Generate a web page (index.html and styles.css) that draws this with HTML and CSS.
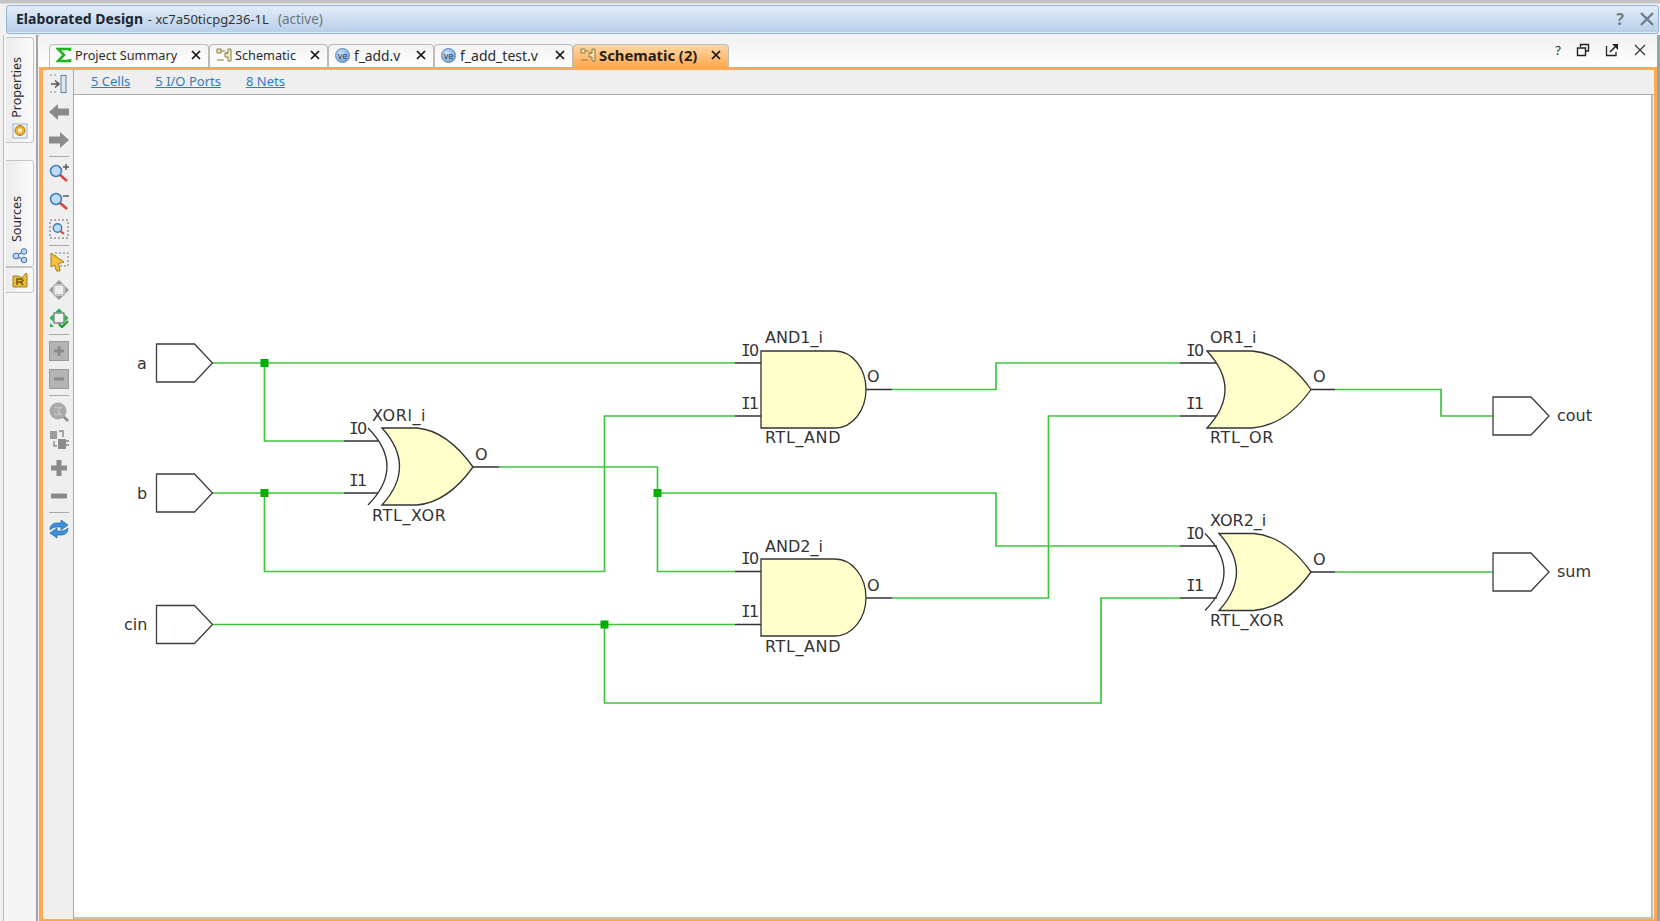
FILE: index.html
```html
<!DOCTYPE html>
<html lang="en">
<head>
<meta charset="utf-8">
<title>Elaborated Design</title>
<link rel="stylesheet" href="styles.css">
</head>
<body>
<div class="app">
  <header class="title">
    <span class="title-main">Elaborated Design</span>
    <span class="title-part">&nbsp;&nbsp;- xc7a50ticpg236-1L</span>
    <span class="title-state">(active)</span>
    <span class="title-actions">
      <span class="title-help">?</span>
      <svg class="ico" width="16" height="16" viewBox="0 0 16 16"><path d="M2 2L14 14M14 2L2 14" stroke="#6d7c88" stroke-width="2.4" fill="none"/></svg>
    </span>
  </header>
  <div class="work">
    <aside class="side">
      <div class="vtab vtab-props">
        <span class="vlabel">Properties</span>
        <svg width="16" height="16" viewBox="0 0 16 16"><rect x="1" y="1" width="14" height="14" fill="#eef3fa" stroke="#9db4cf"/><circle cx="8" cy="7.5" r="5" fill="#eeb02e" stroke="#a87a1c"/><circle cx="8" cy="7.5" r="2.2" fill="#fbeec0"/></svg>
      </div>
      <div class="vtab vtab-src">
        <span class="vlabel">Sources</span>
        <svg width="16" height="15" viewBox="0 0 16 15"><path d="M4 8L12 3M4 8L12 12" stroke="#4a79ad" stroke-width="1.3"/><circle cx="4" cy="8" r="3" fill="#bcd5ef" stroke="#3d6fa8"/><circle cx="12" cy="3.5" r="2.8" fill="#bcd5ef" stroke="#3d6fa8"/><circle cx="12" cy="12" r="2.8" fill="#bcd5ef" stroke="#3d6fa8"/></svg>
      </div>
      <div class="vtab vtab-rtl">
        <svg width="16" height="16" viewBox="0 0 16 16"><path d="M1 4H6L10 6L14 1L15 2V15H1Z" fill="#e8bb3c" stroke="#a67d18"/><path d="M5 13V7H9.500L11 8.500L9.500 10H5M8.500 10L11 13" stroke="#7a5a10" stroke-width="1.500" fill="none"/></svg>
      </div>
    </aside>
    <main class="main">
      <nav class="tabbar">
        <div class="tab tab-summary">
          <svg class="tab-ico" width="16" height="16" viewBox="0 0 16 16"><path d="M14 4V2H2L8 8L2 14H14V12" fill="none" stroke="#1fb31f" stroke-width="2.6"/></svg>
          <span>Project Summary</span>
          <svg class="tab-x" width="10" height="10" viewBox="0 0 10 10"><path d="M1 1L9 9M9 1L1 9" stroke="#111" stroke-width="1.7"/></svg>
        </div>
        <div class="tab tab-schem">
          <svg class="tab-ico" width="16" height="14" viewBox="0 0 16 14"><path d="M1 1H5V5H1ZM9 5H12V1H15V13H12V9H9ZM5 3H9M1 12H8M12 5H9" fill="#f6e9b9" stroke="#8a7a4a"/></svg>
          <span>Schematic</span>
          <svg class="tab-x" width="10" height="10" viewBox="0 0 10 10"><path d="M1 1L9 9M9 1L1 9" stroke="#111" stroke-width="1.7"/></svg>
        </div>
        <div class="tab tab-fadd">
          <span class="ve">ve</span>
          <span>f_add.v</span>
          <svg class="tab-x" width="10" height="10" viewBox="0 0 10 10"><path d="M1 1L9 9M9 1L1 9" stroke="#111" stroke-width="1.7"/></svg>
        </div>
        <div class="tab tab-ftest">
          <span class="ve">ve</span>
          <span>f_add_test.v</span>
          <svg class="tab-x" width="10" height="10" viewBox="0 0 10 10"><path d="M1 1L9 9M9 1L1 9" stroke="#111" stroke-width="1.7"/></svg>
        </div>
        <div class="tab tab-active">
          <svg class="tab-ico" width="16" height="14" viewBox="0 0 16 14"><path d="M1 1H5V5H1ZM9 5H12V1H15V13H12V9H9ZM5 3H9M1 12H8M12 5H9" fill="#f6dfa3" stroke="#8a7a4a"/></svg>
          <span>Schematic (2)</span>
          <svg class="tab-x" width="10" height="10" viewBox="0 0 10 10"><path d="M1 1L9 9M9 1L1 9" stroke="#111" stroke-width="1.7"/></svg>
        </div>
        <div class="tab-actions">
          <span class="tab-help">?</span>
          <svg width="14" height="14" viewBox="0 0 14 14"><path d="M4.500 4V1.500H12.500V8H9.500M1.500 5H9.500V12.500H1.500Z" fill="none" stroke="#222" stroke-width="1.400"/></svg>
          <svg width="14" height="14" viewBox="0 0 14 14"><path d="M1.500 3V12.500H11V9" fill="none" stroke="#222" stroke-width="1.300"/><path d="M5 9L10 4" stroke="#222" stroke-width="1.600"/><path d="M7 1H13V7Z" fill="#222"/></svg>
          <svg width="12" height="12" viewBox="0 0 12 12"><path d="M1 1L11 11M11 1L1 11" stroke="#333" stroke-width="1.100"/></svg>
        </div>
      </nav>
      <section class="panel">
        <div class="toolbar">
          <div class="tool"><svg width="20" height="20" viewBox="0 0 20 20"><path d="M1 1H9M1 18H9" stroke="#888" stroke-dasharray="2 2"/><path d="M2 10H9M6 6.500L10 10L6 13.500" fill="none" stroke="#555" stroke-width="1.600"/><rect x="12" y="1.500" width="5" height="17" fill="#dbe6f2" stroke="#6b8199"/></svg></div>
          <div class="tool"><svg width="20" height="18" viewBox="0 0 20 18"><path d="M0 9L9 1V5.500H20V12.500H9V17Z" fill="#8a8a8a"/></svg></div>
          <div class="tool"><svg width="20" height="18" viewBox="0 0 20 18"><path d="M20 9L11 1V5.500H0V12.500H11V17Z" fill="#8a8a8a"/></svg></div>
          <div class="tool-sep"></div>
          <div class="tool"><svg width="20" height="20" viewBox="0 0 20 20"><path d="M10 11L18 18" stroke="#d8453a" stroke-width="2.600"/><circle cx="7" cy="8" r="5.500" fill="#bcdcf5" stroke="#3f78b5" stroke-width="1.500"/><path d="M14 4H20M17 1V7" stroke="#555" stroke-width="1.400"/></svg></div>
          <div class="tool"><svg width="20" height="20" viewBox="0 0 20 20"><path d="M10 11L18 18" stroke="#d8453a" stroke-width="2.600"/><circle cx="7" cy="8" r="5.500" fill="#bcdcf5" stroke="#3f78b5" stroke-width="1.500"/><path d="M14 5H20" stroke="#555" stroke-width="1.400"/></svg></div>
          <div class="tool"><svg width="20" height="20" viewBox="0 0 20 20"><rect x="1" y="1" width="18" height="18" fill="none" stroke="#666" stroke-dasharray="2 2"/><path d="M10 11L15 15" stroke="#d8453a" stroke-width="2.200"/><circle cx="8.500" cy="9" r="4.200" fill="#bcdcf5" stroke="#3f78b5" stroke-width="1.400"/></svg></div>
          <div class="tool-sep"></div>
          <div class="tool"><svg width="20" height="20" viewBox="0 0 20 20"><rect x="6" y="1" width="13" height="13" fill="none" stroke="#777" stroke-dasharray="2 2"/><path d="M2 1L15 10L9.500 11.500L11 19L7.500 19L5.500 13L2 15Z" fill="#f1c23e" stroke="#a87d17"/></svg></div>
          <div class="tool"><svg width="20" height="20" viewBox="0 0 20 20"><rect x="5" y="5" width="10" height="10" fill="#eee" stroke="#999"/><path d="M10 0L14 4H6ZM10 20L14 16H6ZM0 10L4 6V14ZM20 10L16 6V14Z" fill="#9a9a9a"/></svg></div>
          <div class="tool"><svg width="20" height="20" viewBox="0 0 20 20"><rect x="5" y="5" width="10" height="10" fill="#f2f2f2" stroke="#555"/><path d="M10 0.500L14 4.500H6ZM0.500 10L4.500 6V14ZM19.500 10L15.500 6V14ZM5 19L1 15V19Z" fill="#22b14c"/><path d="M10 16L13 19L19 13" fill="none" stroke="#18a02c" stroke-width="2.400"/></svg></div>
          <div class="tool-sep"></div>
          <div class="tool"><svg width="20" height="20" viewBox="0 0 20 20"><rect x="0.500" y="0.500" width="19" height="19" fill="#b4b4b4" stroke="#999"/><path d="M10 5V15M5 10H15" stroke="#8b8b8b" stroke-width="3"/></svg></div>
          <div class="tool"><svg width="20" height="20" viewBox="0 0 20 20"><rect x="0.500" y="0.500" width="19" height="19" fill="#b4b4b4" stroke="#999"/><path d="M5 10H15" stroke="#8b8b8b" stroke-width="3"/></svg></div>
          <div class="tool-sep"></div>
          <div class="tool"><svg width="20" height="20" viewBox="0 0 20 20"><path d="M14 14L19 19" stroke="#8e8e8e" stroke-width="2.600"/><circle cx="9" cy="9" r="8.500" fill="#a9a9a9"/><path d="M5 5.500H12L9 9L12 12.500H5" fill="none" stroke="#c4c4c4" stroke-width="1.400"/></svg></div>
          <div class="tool"><svg width="20" height="20" viewBox="0 0 20 20"><rect x="1" y="1" width="7" height="8" fill="#9c9c9c"/><rect x="9" y="9" width="8" height="10" fill="#8c8c8c"/><path d="M10 1H14V7M5 11V16H8M17 11H20M17 15H20" fill="none" stroke="#888" stroke-width="1.400"/></svg></div>
          <div class="tool"><svg width="20" height="20" viewBox="0 0 20 20"><path d="M10 2V18M2 10H18" stroke="#8a8a8a" stroke-width="5"/></svg></div>
          <div class="tool"><svg width="20" height="20" viewBox="0 0 20 20"><path d="M2 10H18" stroke="#8a8a8a" stroke-width="5"/></svg></div>
          <div class="tool-sep"></div>
          <div class="tool"><svg width="20" height="20" viewBox="0 0 20 20"><path d="M1 11C1 6 4 4 8 4H12V1L19 6L12 11V8H8C5 8 3 9 1 11Z" fill="#3d8fdc" stroke="#2166ad" stroke-width=".7"/><path d="M19 9C19 14 16 16 12 16H8V19L1 14L8 9V12H12C15 12 17 11 19 9Z" fill="#3d8fdc" stroke="#2166ad" stroke-width=".7"/></svg></div>
        </div>
        <div class="content">
          <div class="links">
            <a class="link">5 Cells</a>
            <a class="link">5 I/O Ports</a>
            <a class="link">8 Nets</a>
          </div>
          <div class="canvas">
            <svg class="sch" viewBox="74 95 1577 822" width="1577" height="822">
              <defs>
                <g id="port"><path d="M0 0H38L56 19L38 38H0Z" class="outline"/></g>
              </defs>
              <g class="wires">
                <path d="M212 363H735M264.500 363V441H344"/>
                <path d="M212 493H344M264.500 493V571.500H604.500V416H735"/>
                <path d="M212 624.500H735M604.500 624.500V703H1101V598H1180"/>
                <path d="M499 467H657.500V571.500H735M657.500 493H996V546H1180"/>
                <path d="M892 389.500H996V363H1180"/>
                <path d="M892 598H1048.500V416H1180"/>
                <path d="M1335 389.500H1441V416H1493"/>
                <path d="M1335 572H1493"/>
              </g>
              <g class="pins">
                <path d="M344 441H378M344 493H378M473 467H499"/>
                <path d="M735 363H761M735 416H761M866 389.500H892"/>
                <path d="M735 571.500H761M735 624.500H761M866 598H892"/>
                <path d="M1180 363H1217M1180 416H1217M1311 389.500H1335"/>
                <path d="M1180 546H1217M1180 598H1217M1311 572H1335"/>
              </g>
              <g class="junctions">
                <rect x="260.500" y="359" width="8" height="8"/>
                <rect x="260.500" y="489" width="8" height="8"/>
                <rect x="653.500" y="489" width="8" height="8"/>
                <rect x="600.500" y="620.500" width="8" height="8"/>
              </g>
              <use href="#port" x="156.500" y="344"/>
              <use href="#port" x="156.500" y="474"/>
              <use href="#port" x="156.500" y="605.500"/>
              <use href="#port" x="1493" y="397"/>
              <use href="#port" x="1493" y="553"/>
              <path class="gate" d="M382 428H417C440 430 458 446 473 467C458 488 440 503 417 505H382Q417 466.500 382 428Z"/>
              <path class="arc" d="M368 428Q406 466.500 368 505"/>
              <path class="gate" d="M761 351H835A31 38.500 0 0 1 835 428H761Z"/>
              <path class="gate" d="M761 559H835A31 38.500 0 0 1 835 636H761Z"/>
              <path class="gate" d="M1207 351H1252C1276 353 1296 368 1311 389.500C1296 411 1276 426 1252 428H1207Q1243 389.500 1207 351Z"/>
              <path class="gate" d="M1219 533.500H1254C1277 535.500 1296 551 1311 572C1296 593 1277 608.500 1254 610.500H1219Q1254 572 1219 533.500Z"/>
              <path class="arc" d="M1205 533.500Q1243 572 1205 610.500"/>
              <g class="labels">
                <text x="137" y="369">a</text>
                <text x="137" y="499">b</text>
                <text x="124" y="630">cin</text>
                <text x="1557" y="421">cout</text>
                <text x="1557" y="577">sum</text>
                <text class="wide" x="372" y="421">XORl_i</text>
                <text class="wide" x="372" y="521">RTL_XOR</text>
                <text x="475" y="460">O</text>
                <text x="765" y="343">AND1_i</text>
                <text class="wide" x="765" y="443">RTL_AND</text>
                <text x="867" y="382">O</text>
                <text x="765" y="552">AND2_i</text>
                <text class="wide" x="765" y="652">RTL_AND</text>
                <text x="867" y="591">O</text>
                <text x="1210" y="343">OR1_i</text>
                <text class="wide" x="1210" y="443">RTL_OR</text>
                <text x="1313" y="382">O</text>
                <text x="1210" y="526">XOR2_i</text>
                <text class="wide" x="1210" y="626">RTL_XOR</text>
                <text x="1313" y="565">O</text>
              </g>
              <g class="pinlabels">
                <text x="349" y="434"><tspan class="pin-i">I</tspan>0</text>
                <text x="349" y="486"><tspan class="pin-i">I</tspan>1</text>
                <text x="741" y="356"><tspan class="pin-i">I</tspan>0</text>
                <text x="741" y="409"><tspan class="pin-i">I</tspan>1</text>
                <text x="741" y="564"><tspan class="pin-i">I</tspan>0</text>
                <text x="741" y="617"><tspan class="pin-i">I</tspan>1</text>
                <text x="1186" y="356"><tspan class="pin-i">I</tspan>0</text>
                <text x="1186" y="409"><tspan class="pin-i">I</tspan>1</text>
                <text x="1186" y="539"><tspan class="pin-i">I</tspan>0</text>
                <text x="1186" y="591"><tspan class="pin-i">I</tspan>1</text>
              </g>
            </svg>
          </div>
        </div>
      </section>
    </main>
  </div>
</div>
</body>
</html>
```

FILE: styles.css
```css
* { box-sizing: border-box; }
html, body { margin: 0; padding: 0; }
body { font-family: "Noto Sans", "DejaVu Sans", sans-serif; color: #222; overflow: hidden; }

.app {
  width: 1660px;
  height: 921px;
  display: flex;
  flex-direction: column;
  padding-top: 5px;
  background: linear-gradient(#c4c4c4 0, #c4c4c4 3px, #f1f1f1 4px);
}

.title {
  height: 29px;
  margin: 0 1px 1px 6px;
  padding: 0 3px 2px 9px;
  display: flex;
  align-items: center;
  flex: none;
  border: 1px solid #93b4d8;
  border-radius: 3px;
  background: linear-gradient(#e3edf8, #b6cee8);
  box-shadow: inset 0 -1px 0 #dfeaf6;
  white-space: pre;
}
.title-main { font-weight: 700; font-size: 14px; color: #1c2530; }
.title-part { color: #333; font-size: 13px; margin-left: -2px; }
.title-state { color: #6e7780; margin-left: 9px; font-size: 13.5px; }
.title-actions { margin-left: auto; display: flex; align-items: center; gap: 15px; }
.title-help { color: #6d7c88; font-weight: 700; font-size: 16px; line-height: 16px; }

.work {
  height: 886px;
  display: flex;
}

.side {
  width: 33px;
  margin-left: 3px;
  padding: 2px 2px 0 2px;
  flex: none;
  border-left: 1px solid #bdbdbd;
  background: #f5f5f5;
  display: flex;
  flex-direction: column;
}
.vtab {
  width: 28px;
  flex: none;
  border: 1px solid #c4c4c4;
  border-left: 0;
  border-radius: 0 4px 4px 0;
  background: linear-gradient(90deg, #ececec, #fbfbfb);
  display: flex;
  flex-direction: column;
  align-items: center;
}
.vtab-props { height: 106px; padding-top: 19px; gap: 5px; }
.vtab-src { height: 107px; margin-top: 17px; padding-top: 35px; gap: 6px; }
.vtab-rtl { height: 26px; padding-top: 4px; }
.vlabel {
  writing-mode: vertical-rl;
  transform: rotate(180deg);
  font-size: 12.5px;
  line-height: 16px;
  color: #2a2a2a;
  margin-right: 6px;
}

.main {
  flex: 1;
  min-width: 0;
  display: flex;
  flex-direction: column;
  border-left: 2px solid #a4a4a4;
  border-right: 3px solid #9aa3a3;
  padding-left: 1px;
  background: #f3f3f3;
  box-shadow: inset 0 1px 0 #a8a8a8;
}

.tabbar {
  height: 32px;
  flex: none;
  padding-left: 10px;
  display: flex;
  align-items: flex-end;
  background: linear-gradient(#f1f1f1, #ffffff);
}
.tab {
  height: 23px;
  flex: none;
  padding: 0 7px 2px 6px;
  display: flex;
  align-items: center;
  gap: 3px;
  border: 1px solid #bcbcbc;
  border-bottom: 0;
  border-radius: 4px 4px 0 0;
  background: linear-gradient(#f3f3f3, #ffffff);
  font-size: 12.7px;
  color: #2b2b2b;
  white-space: nowrap;
}
.tab-x { margin-left: auto; flex: none; }
.tab-ico { flex: none; }
.tab-summary { width: 160px; }
.tab-schem { width: 119px; }
.tab-fadd { width: 106px; font-size: 13.8px; }
.tab-ftest { width: 139px; font-size: 14px; }
.tab-active {
  width: 156px;
  background: linear-gradient(#ffd7a6, #ffa94f);
  font-size: 14.8px;
  font-weight: 700;
  color: #1f1f1f;
}
.ve {
  width: 15px;
  height: 15px;
  border-radius: 50%;
  background: radial-gradient(circle at 40% 35%, #cfe3f7, #5f91c9);
  border: 1px solid #5a88bd;
  font-size: 9px;
  font-weight: 400;
  line-height: 13px;
  text-align: center;
  color: #20406a;
  flex: none;
  margin-right: 1px;
}
.tab-actions {
  margin-left: auto;
  align-self: flex-start;
  height: 30px;
  padding-right: 11px;
  display: flex;
  align-items: center;
  gap: 15px;
}
.tab-help { font-size: 13px; color: #333; }

.panel {
  flex: 1;
  min-height: 0;
  display: flex;
  border-style: solid;
  border-color: #ffa955;
  border-width: 3px 3px 2px 4px;
  background: #efefef;
}

.toolbar {
  width: 31px;
  flex: none;
  padding-left: 1px;
  display: flex;
  flex-direction: column;
  align-items: center;
  border-right: 1px solid #ababab;
}
.tool {
  height: 28px;
  flex: none;
  display: flex;
  align-items: center;
  justify-content: center;
}
.tool-sep {
  width: 20px;
  height: 1px;
  flex: none;
  margin: 2px 0;
  background: #a9a9a9;
}

.content {
  flex: 1;
  min-width: 0;
  display: flex;
  flex-direction: column;
}
.links {
  height: 25px;
  flex: none;
  padding: 0 0 2px 17px;
  display: flex;
  align-items: center;
  gap: 25px;
  border-bottom: 1px solid #adadad;
}
.link {
  font-size: 13px;
  color: #2e7cc4;
  text-decoration: underline;
}
.canvas {
  flex: 1;
  min-height: 0;
  background: #fff;
  overflow: hidden;
  border-right: 2px solid #bcbcbc;
  border-bottom: 2px solid #c2c2c2;
  margin-right: 1px;
}
.sch { display: block; }

.outline { fill: #fff; stroke: #3d3d3d; stroke-width: 1.3; }
.wires path { fill: none; stroke: #3ec63e; stroke-width: 1.7; }
.pins path { fill: none; stroke: #333; stroke-width: 1.5; }
.junctions rect { fill: #00b000; }
.gate { fill: #ffffcc; stroke: #333; stroke-width: 1.3; }
.arc { fill: none; stroke: #333; stroke-width: 1.3; }
.labels text { font-family: "DejaVu Sans", sans-serif; font-size: 16px; fill: #333; }
.labels .wide { letter-spacing: .6px; }
.pinlabels text { font-family: "DejaVu Sans", sans-serif; font-size: 16px; letter-spacing: -1.6px; fill: #333; }
.pin-i { font-family: "DejaVu Sans Mono", monospace; }
```
